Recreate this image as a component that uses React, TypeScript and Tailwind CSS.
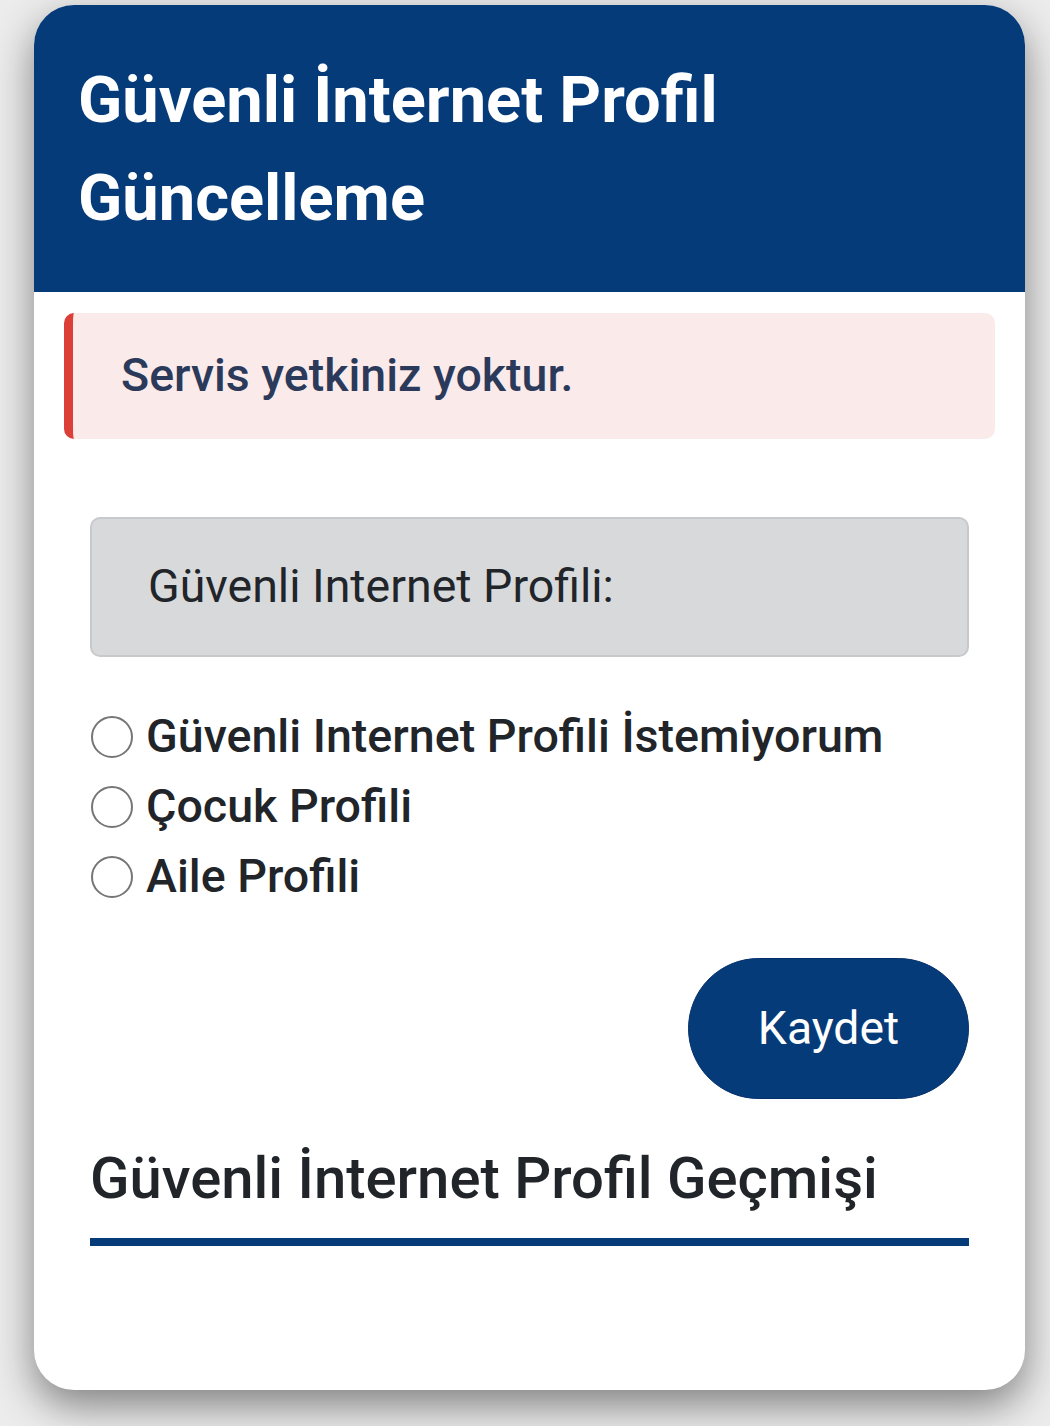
const options = [
  "Güvenli Internet Profili İstemiyorum",
  "Çocuk Profili",
  "Aile Profili",
];

export default function App() {
  return (
    <div className="min-h-[1426px] bg-[#ececec] pt-[5px] px-[25px] pb-[36px] font-['Roboto',sans-serif]">
      <div className="ml-[9px] w-[991px] bg-white rounded-[40px] overflow-hidden shadow-[0_16px_40px_rgba(0,0,0,0.45)]">
        {/* Header */}
        <div className="bg-[#063b7a] pt-[46px] pb-[45px] px-[44px]">
          <h1 className="text-white font-bold text-[65px] leading-[98px]">
            Güvenli İnternet Profil
            <br />
            Güncelleme
          </h1>
        </div>

        {/* Alert */}
        <div className="mx-[30px] mt-[21px] h-[126px] flex items-center bg-[#fbeaea] rounded-[10px] border-l-[9px] border-[#dc3f37] pl-[48px]">
          <p className="text-[#2b3a5a] text-[46.5px] font-medium">Servis yetkiniz yoktur.</p>
        </div>

        <div className="px-[56px] pt-[78px] pb-[144px]">
          {/* Label box */}
          <div className="h-[140px] flex items-center bg-[#d8d9db] border-2 border-[#c8c9cb] rounded-[10px] pl-[56px]">
            <span className="text-[#212529] text-[46.5px]">Güvenli Internet Profili:</span>
          </div>

          {/* Radios */}
          <div className="mt-[45px] flex flex-col">
            {options.map((o) => (
              <label key={o} className="h-[70px] flex items-center gap-[13px] pl-[1px]">
                <input
                  type="radio"
                  name="profil"
                  className="appearance-none shrink-0 w-[42px] h-[42px] rounded-full border-[2.5px] border-[#767676] bg-white"
                />
                <span className="text-[#212529] text-[46.6px] font-medium">{o}</span>
              </label>
            ))}
          </div>

          {/* Save */}
          <div className="mt-[46px] flex justify-end">
            <button className="w-[281px] h-[141px] rounded-full bg-[#063b7a] border border-[#04306a] text-white text-[46.3px]">
              Kaydet
            </button>
          </div>

          {/* History */}
          <h2 className="mt-[46px] text-[#212529] text-[58px] font-medium leading-[67px]">
            Güvenli İnternet Profil Geçmişi
          </h2>
          <div className="mt-[26px] h-[8px] bg-[#063b7a]" />
        </div>
      </div>
    </div>
  );
}
